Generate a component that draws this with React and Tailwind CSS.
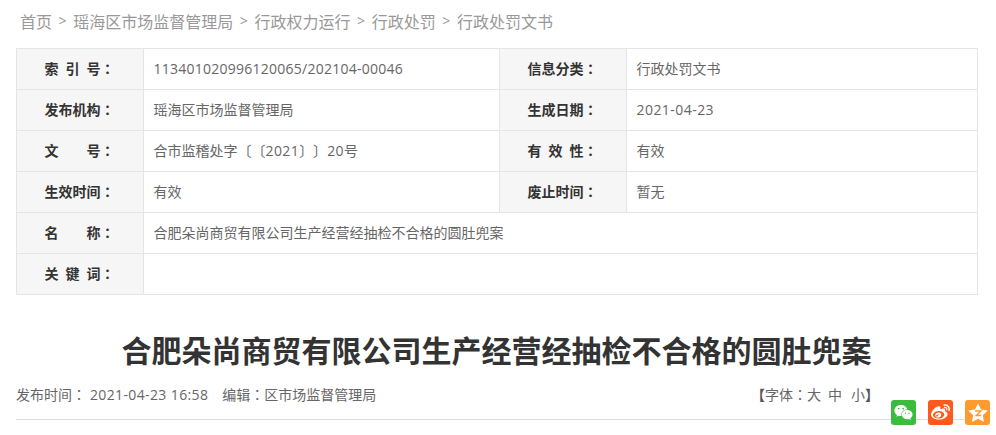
import { FaWeixin, FaWeibo } from "react-icons/fa";

const font = { fontFamily: '"Noto Sans CJK SC", sans-serif' };

const Colon = () => <span className="font-['Noto_Sans_CJK_TC']">：</span>;

function Lab({ children }) {
  return (
    <td className="w-[127px] border border-[#e5e5e5] bg-[#f6f6f6] pb-[2px] pl-[27.5px] text-[14px] font-bold text-[#333]">
      {children}
      <Colon />
    </td>
  );
}

function Val({ children, span }) {
  return (
    <td colSpan={span} className="border border-[#e5e5e5] pb-[2px] pl-[9.5px] text-[14px] text-[#666]">
      {children}
    </td>
  );
}

const Sep = () => <span className="mx-[6.6px] font-['Open_Sans'] text-[14px]">&gt;</span>;

export default function App() {
  return (
    <div className="relative h-[435px] w-[996px] overflow-hidden bg-white pl-4 pr-[18px] [text-spacing-trim:space-all]" style={font}>
      <div className="flex h-[48px] items-center pb-[7px] pl-1 text-[16px] text-[#999]">
        首页<Sep />瑶海区市场监督管理局<Sep />行政权力运行<Sep />行政处罚<Sep />行政处罚文书
      </div>

      <table className="w-[962px] table-fixed border-collapse">
        <colgroup>
          <col className="w-[127px]" />
          <col className="w-[356px]" />
          <col className="w-[127px]" />
          <col />
        </colgroup>
        <tbody>
          <tr className="h-[41px]">
            <Lab><span className="tracking-[7px]">索引</span>号</Lab>
            <Val><span className="font-['Open_Sans'] tracking-[0.25px]">113401020996120065/202104-00046</span></Val>
            <Lab>信息分类</Lab>
            <Val>行政处罚文书</Val>
          </tr>
          <tr className="h-[41px]">
            <Lab>发布机构</Lab>
            <Val>瑶海区市场监督管理局</Val>
            <Lab>生成日期</Lab>
            <Val><span className="font-['Open_Sans'] tracking-[0.45px]">2021-04-23</span></Val>
          </tr>
          <tr className="h-[41px]">
            <Lab><span className="tracking-[28px]">文</span>号</Lab>
            <Val>合市监稽处字〔〔<span className="font-['Open_Sans'] tracking-[0.4px]">2021</span>〕〕<span className="font-['Open_Sans'] tracking-[0.4px]">20</span>号</Val>
            <Lab><span className="tracking-[7px]">有效</span>性</Lab>
            <Val>有效</Val>
          </tr>
          <tr className="h-[41px]">
            <Lab>生效时间</Lab>
            <Val>有效</Val>
            <Lab>废止时间</Lab>
            <Val>暂无</Val>
          </tr>
          <tr className="h-[41px]">
            <Lab><span className="tracking-[28px]">名</span>称</Lab>
            <Val span={3}>合肥朵尚商贸有限公司生产经营经抽检不合格的圆肚兜案</Val>
          </tr>
          <tr className="h-[41px]">
            <Lab><span className="tracking-[7px]">关键</span>词</Lab>
            <Val span={3}></Val>
          </tr>
        </tbody>
      </table>

      <h1 className="mt-[32px] pr-px text-center text-[30px] font-bold leading-[44px] text-[#333]">
        合肥朵尚商贸有限公司生产经营经抽检不合格的圆肚兜案
      </h1>

      <div className="mt-[11px] flex h-[24px] w-[962px] items-center justify-between text-[14px] text-[#666]">
        <div className="flex">
          发布时间<Colon />
          <span className="ml-[4px] font-['Open_Sans'] tracking-[0.37px]">2021-04-23 16:58</span>
          <span className="ml-[14px]">编辑<Colon />区市场监督管理局</span>
        </div>
        <div className="mr-[99px] flex">
          <span className="font-bold text-[#555]">【</span>字体<Colon />
          <span>大</span>
          <span className="ml-[7px]">中</span>
          <span className="ml-[9px]">小</span>
          <span className="font-bold text-[#555]">】</span>
        </div>
      </div>

      <div className="mt-[13px] h-px w-[962px] bg-[#ddd]" />

      <div className="absolute left-[891px] top-[400px] flex gap-3">
        <div className="flex h-[25px] w-[25px] items-center justify-center rounded-[3px] bg-[#3cbc3f] text-white">
          <FaWeixin size={19} />
        </div>
        <div className="flex h-[25px] w-[25px] items-center justify-center rounded-[3px] bg-[#ff5a1c] text-white">
          <FaWeibo size={19} />
        </div>
        <div className="flex h-[25px] w-[25px] items-center justify-center rounded-[3px] bg-[#ff9a2e]">
          <svg width="22" height="22" viewBox="0 0 20 20">
            <path d="M10 1.2l2.7 5.7 6.2.8-4.5 4.3 1.1 6.2-5.5-3-5.500 3 1.100-6.200L1.100 7.700l6.200-.8z" fill="#fff" />
            <path d="M7.300 8.200h5.400L8.400 12.300h4.300" fill="none" stroke="#ff9a2e" strokeWidth="1.300" />
          </svg>
        </div>
      </div>
    </div>
  );
}
